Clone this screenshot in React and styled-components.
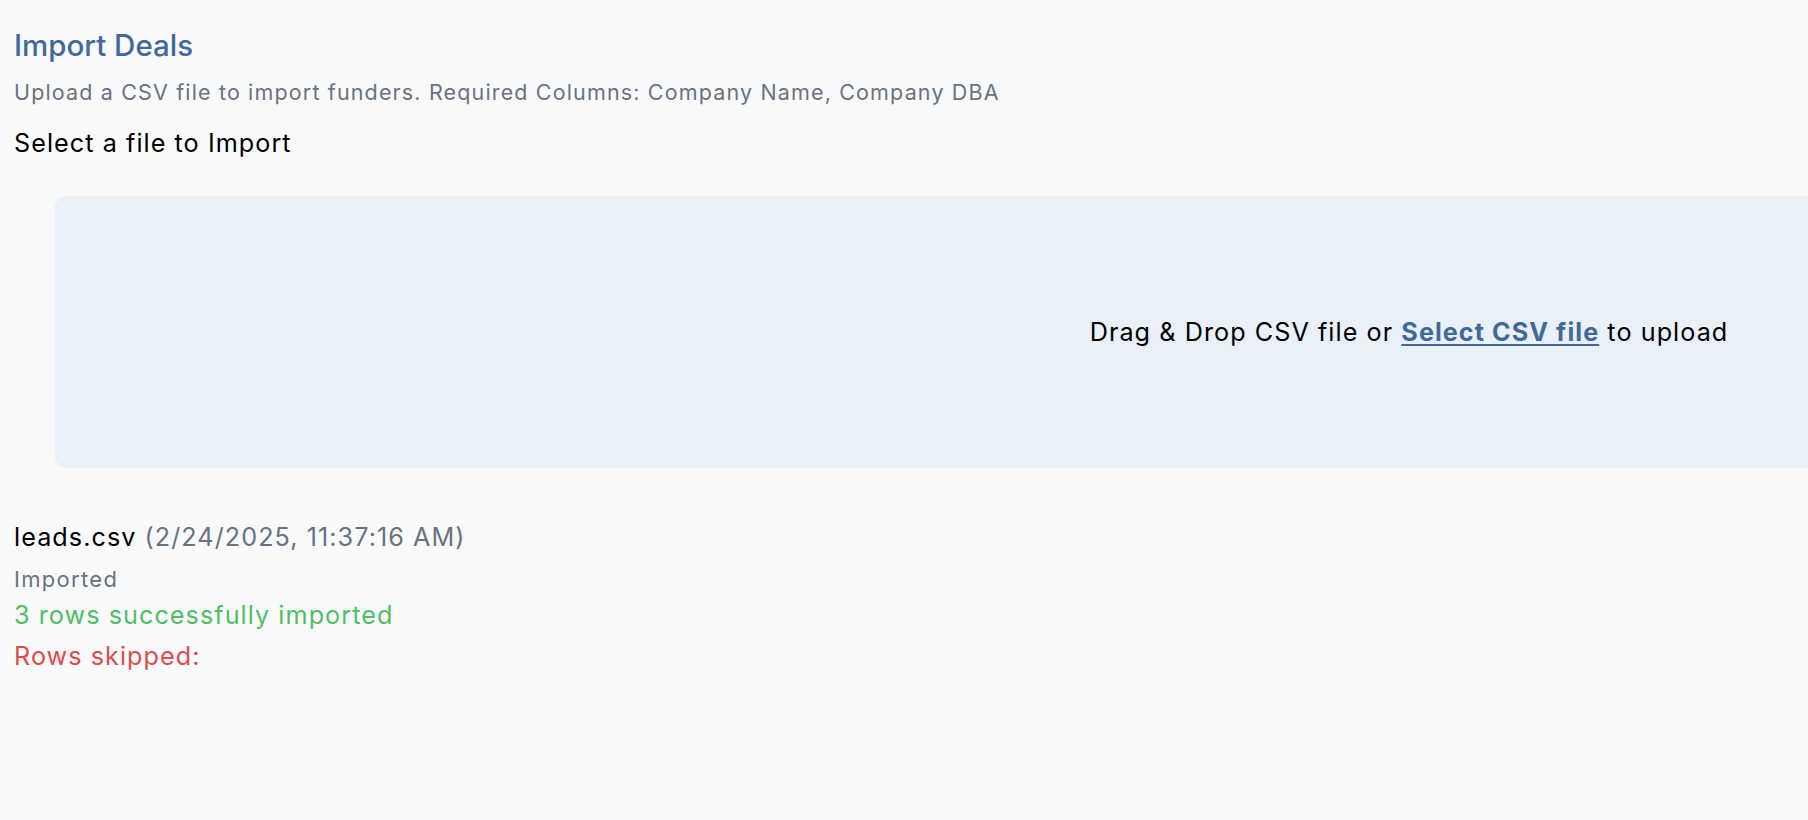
import React from 'react';
import styled, { createGlobalStyle } from 'styled-components';

const GlobalStyle = createGlobalStyle`
  html, body {
    margin: 0;
    padding: 0;
    background: #f8fafc;
    overflow-x: hidden;
  }
  body {
    font-family: Inter, "Noto Sans", sans-serif;
    color: #000;
  }
`;

const Page = styled.div`
  min-height: 820px;
  padding: 25px 14px 0;
  box-sizing: border-box;
  overflow: hidden;
`;

const Title = styled.h1`
  margin: 0;
  font-size: 29.5px;
  font-weight: 500;
  line-height: 40px;
  color: #41699a;
`;

const Subtitle = styled.p`
  margin: 12px 0 0;
  font-size: 21.5px;
  letter-spacing: 1.15px;
  line-height: 30px;
  color: #6b7280;
`;

const Label = styled.p`
  margin: 19px 0 0;
  font-size: 25.2px;
  letter-spacing: 1.05px;
  line-height: 34px;
`;

const DropZone = styled.div`
  margin: 36px 0 0 41px;
  width: 2708px;
  height: 272px;
  border-radius: 12px;
  background: #e9f0f7;
  display: flex;
  align-items: center;
  justify-content: center;
  font-size: 25.2px;
  letter-spacing: 1.05px;
`;

const SelectLink = styled.a`
  color: #41699a;
  font-weight: 700;
  text-decoration: underline;
  text-underline-offset: 3px;
  cursor: pointer;
`;

const Result = styled.div`
  margin-top: 51px;
  display: flex;
  flex-direction: column;
  letter-spacing: 1.05px;
`;

const FileLine = styled.div`
  font-size: 25.2px;
  line-height: 36px;
`;

const Muted = styled.span`
  color: #6b7280;
`;

const Status = styled.div`
  margin-top: 9px;
  font-size: 22px;
  letter-spacing: 1.3px;
  line-height: 31px;
  color: #6b7280;
`;

const Message = styled.div`
  font-size: 25.2px;
  line-height: 41px;
  color: ${({ $tone }) => ($tone === 'error' ? '#e04b4b' : '#50bf62')};
`;

export default function App() {
  return (
    <>
      <GlobalStyle />
      <Page>
        <Title>Import Deals</Title>
        <Subtitle>Upload a CSV file to import funders. Required Columns: Company Name, Company DBA</Subtitle>
        <Label>Select a file to Import</Label>
        <DropZone>
          <span>
            Drag &amp; Drop CSV file or <SelectLink>Select CSV file</SelectLink> to upload
          </span>
        </DropZone>
        <Result>
          <FileLine>
            leads.csv <Muted>(2/24/2025, 11:37:16 AM)</Muted>
          </FileLine>
          <Status>Imported</Status>
          <Message $tone="success">3 rows successfully imported</Message>
          <Message $tone="error">Rows skipped:</Message>
        </Result>
      </Page>
    </>
  );
}
